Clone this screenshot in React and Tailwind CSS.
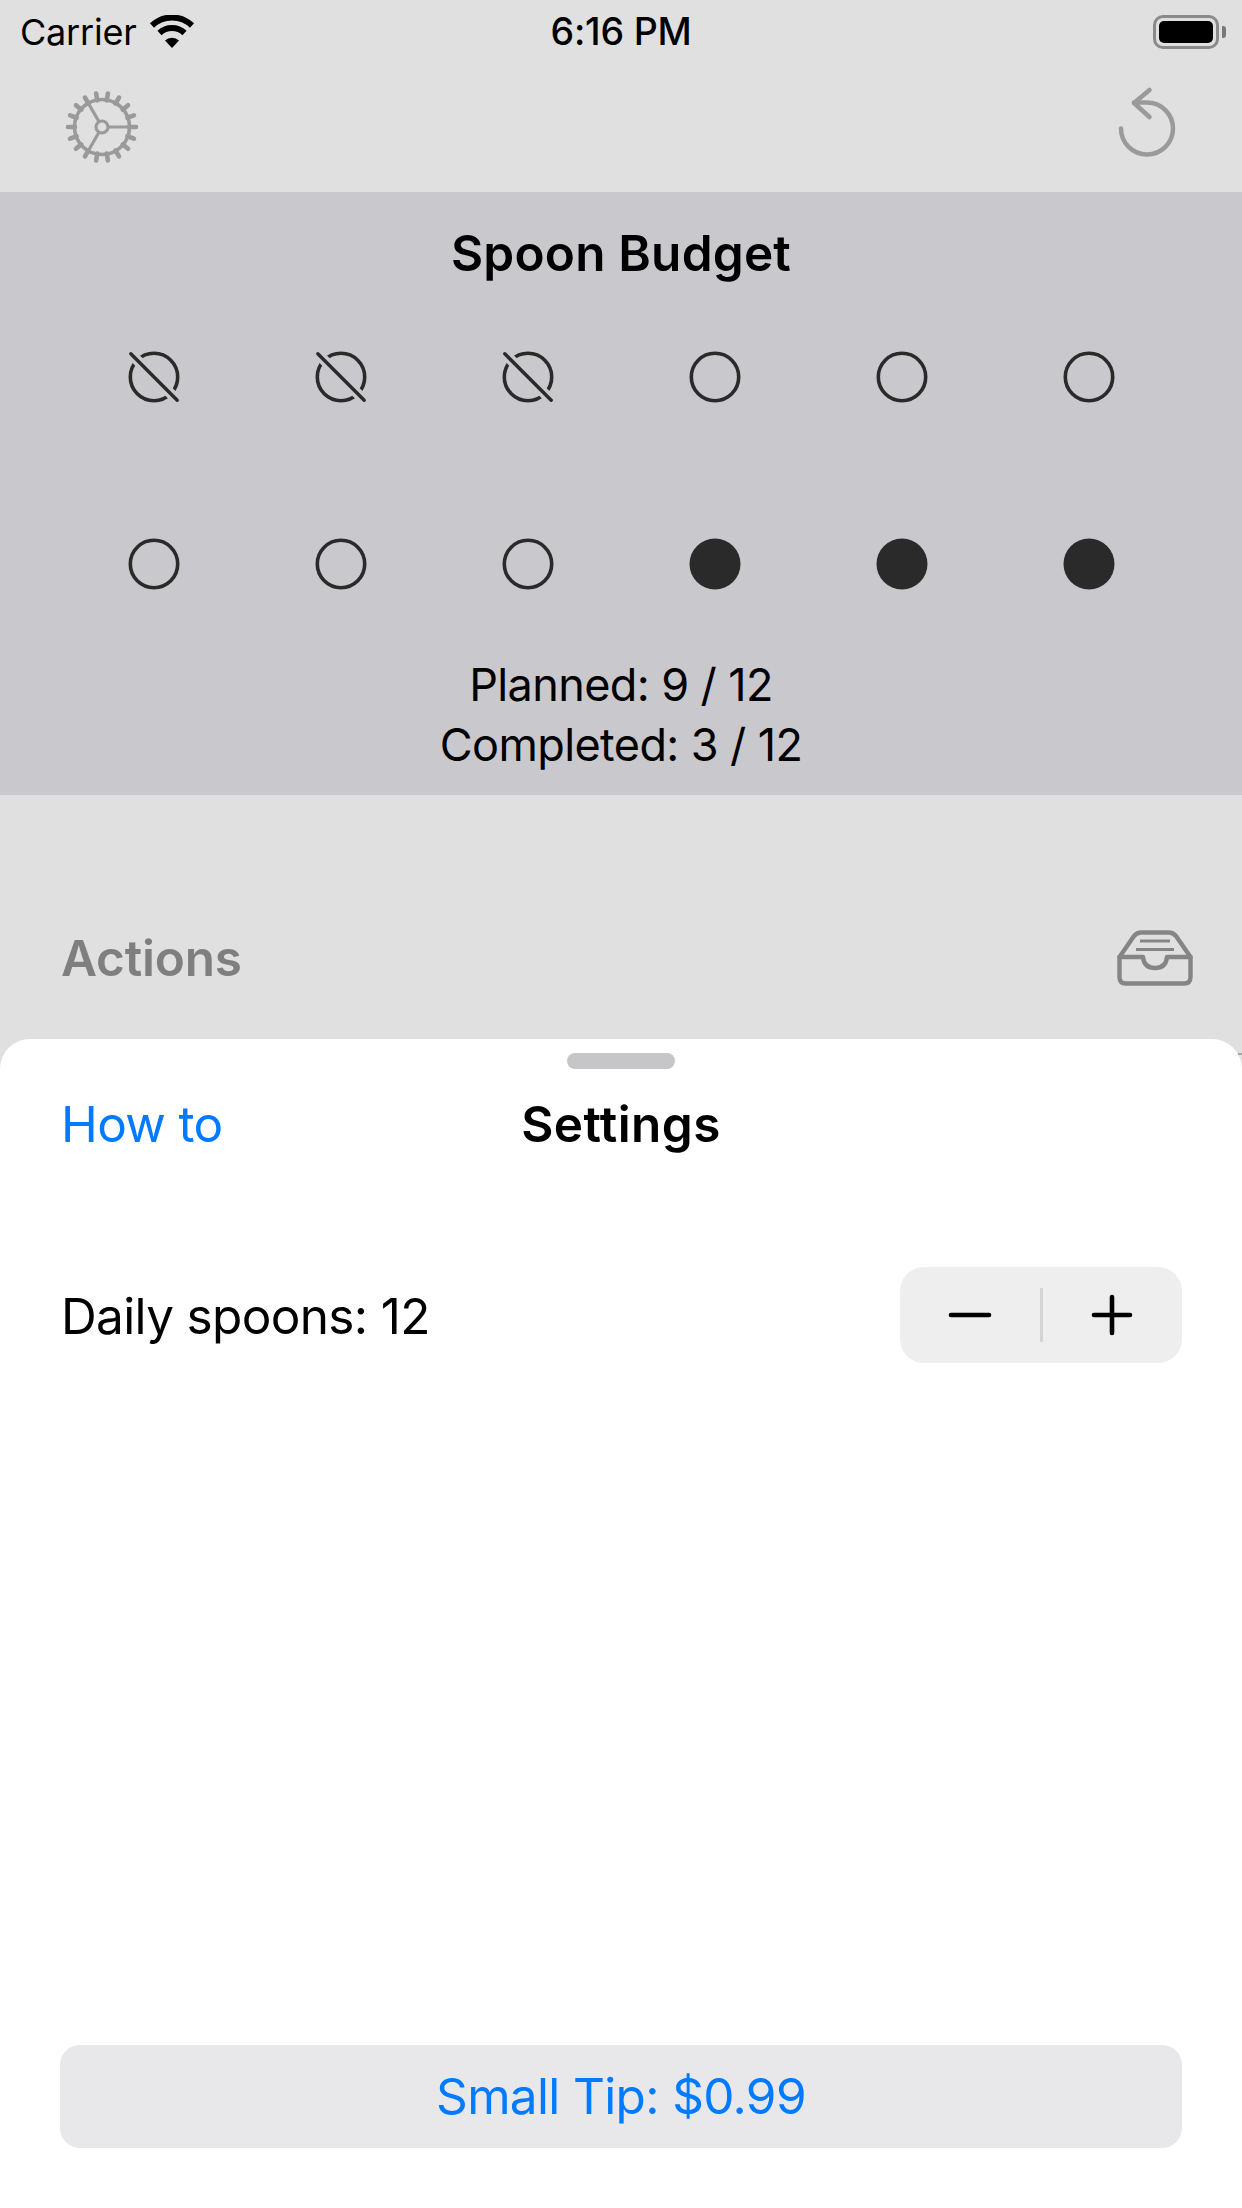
const FONT = "font-['Inter','Liberation_Sans',sans-serif]";

function Wifi() {
  return (
    <svg width="46" height="34" viewBox="0 0 46 34" className="ml-[12px]">
      <path d="M3 10.5 A29 29 0 0 1 43 10.5" fill="none" stroke="#000" strokeWidth="6" />
      <path d="M10.5 18 A18 18 0 0 1 35.5 18" fill="none" stroke="#000" strokeWidth="6" />
      <path d="M16 25.5 A10 10 0 0 1 30 25.5 L23 33 Z" fill="#000" />
    </svg>
  );
}

function Battery() {
  return (
    <div className="flex items-center gap-[3px]">
      <div className="w-[66px] h-[34px] rounded-[10px] border-[3px] border-[#8a8a8a] p-[3px]">
        <div className="w-full h-full rounded-[5px] bg-black" />
      </div>
      <div className="w-[4px] h-[12px] rounded-r-[3px] bg-[#777777]" />
    </div>
  );
}

function Gear() {
  const teeth = Array.from({ length: 18 }, (_, i) => i * 20 + 10);
  return (
    <svg width="76" height="76" viewBox="0 0 76 76" className="mb-[3px]">
      <g stroke="#9a9a9a" fill="none">
        <circle cx="38" cy="38" r="27.5" strokeWidth="3.6" />
        <circle cx="38" cy="38" r="6" strokeWidth="3.2" />
        {teeth.map((a) => (
          <line key={a} x1="38" y1="11" x2="38" y2="4" strokeWidth="4.6" strokeLinecap="round" transform={`rotate(${a} 38 38)`} />
        ))}
        <path d="M44 38 H65 M35 32.8 L24.2 14 M35 43.2 L24.2 62" strokeWidth="3.2" />
      </g>
    </svg>
  );
}

function Undo() {
  return (
    <svg width="60" height="84" viewBox="0 0 60 84">
      <g fill="none" stroke="#9a9a9a" strokeWidth="4.5" strokeLinecap="round" strokeLinejoin="round">
        <path d="M4 42.5 A26 26 0 1 0 30 16.5 L17 16.5" />
        <path d="M32.5 4 L17 17 L32.5 31" />
      </g>
    </svg>
  );
}

function Spoon({ kind }) {
  if (kind === "full") {
    return <svg width="52" height="52" viewBox="0 0 52 52"><circle cx="26" cy="26" r="25.5" fill="#2a2a2a" /></svg>;
  }
  return (
    <svg width="56" height="56" viewBox="0 0 56 56">
      <circle cx="28" cy="28" r="23.7" fill="none" stroke="#2a2a2a" strokeWidth="3.6" />
      {kind === "used" && (
        <>
          <line x1="4" y1="4" x2="52" y2="52" stroke="#c9c8cd" strokeWidth="10.5" />
          <line x1="4.8" y1="4.8" x2="51.2" y2="51.2" stroke="#2a2a2a" strokeWidth="3.4" strokeLinecap="round" />
        </>
      )}
    </svg>
  );
}

function Inbox() {
  return (
    <svg width="78" height="56" viewBox="0 0 78 56">
      <g fill="none" stroke="#858585" strokeWidth="4.4" strokeLinejoin="round" strokeLinecap="round">
        <path d="M3.5 27 L18 6 Q21 2.5 25 2.5 H53 Q57 2.5 60 6 L74.5 27 V47 Q74.5 53.5 68 53.5 H10 Q3.5 53.5 3.5 47 Z" />
        <path d="M3.5 27 H27 Q28 38 39 38 Q50 38 51 27 H74.5" />
      </g>
      <path d="M24 11 H54 M20 19.5 H58" stroke="#858585" strokeWidth="3" />
    </svg>
  );
}

const spoons = ["used", "used", "used", "empty", "empty", "empty", "empty", "empty", "empty", "full", "full", "full"];

export default function App() {
  return (
    <div className={`${FONT} w-[1242px] h-[2208px] bg-[#e0e0e0] flex flex-col text-black overflow-hidden`}>
      <div className="h-[64px] relative flex items-center justify-between pl-[20px] pr-[16px]">
        <div className="flex items-center">
          <span className="text-[36px] tracking-[-0.2px] leading-none">Carrier</span>
          <Wifi />
        </div>
        <span className="absolute left-0 right-0 text-center text-[37.5px] font-medium tracking-[-0.2px] leading-none">6:16 PM</span>
        <Battery />
      </div>

      <div className="h-[128px] flex items-center justify-between pl-[64px] pr-[65px]">
        <Gear />
        <Undo />
      </div>

      <section className="h-[603px] bg-[#c9c8cd] px-[60px] flex flex-col items-center">
        <h1 className="mt-[38px] h-[48px] flex items-center text-[49.5px] font-semibold tracking-[0.2px] leading-none">Spoon Budget</h1>
        <div className="mt-[5px] w-full grid grid-cols-6 auto-rows-[187px]">
          {spoons.map((k, i) => (
            <div key={i} className="flex items-center justify-center"><Spoon kind={k} /></div>
          ))}
        </div>
        <div className="mt-[-2px] text-[45px] leading-[60px] text-center tracking-[-0.6px]">
          <p>Planned: 9 / 12</p>
          <p>Completed: 3 / 12</p>
        </div>
      </section>

      <div className="h-[244px] flex items-start justify-between pl-[61px] pr-[48px]">
        <span className="mt-[135px] text-[49.5px] font-semibold leading-[56px] tracking-[-0.2px] text-[#7f7f7f]">Actions</span>
        <div className="mt-[135px]"><Inbox /></div>
      </div>

      <section className="relative flex-1 bg-white rounded-t-[30px] px-[60px] flex flex-col">
        <div className="absolute top-[14px] right-0 w-[4px] h-[2px] bg-[#a8a8a8]" />
        <div className="self-center mt-[14px] w-[108px] h-[16px] rounded-full bg-[#c6c6c8]" />
        <div className="relative mt-[28px] h-[56px] flex items-center">
          <span className="ml-[1px] text-[49.5px] tracking-[-0.65px] text-[#007aff] leading-none">How to</span>
          <span className="absolute left-0 right-0 text-center text-[49.5px] font-semibold tracking-[0.4px] leading-none">Settings</span>
        </div>
        <div className="mt-[114px] flex items-center justify-between">
          <span className="ml-[1px] mt-[3px] text-[49.5px] tracking-[-0.65px] leading-none">Daily spoons: 12</span>
          <div className="w-[282px] h-[96px] rounded-[24px] bg-[#eeeeef] flex items-center">
            <div className="flex-1 flex items-center justify-center">
              <svg width="44" height="44" viewBox="0 0 44 44"><path d="M3 22 H41" stroke="#000" strokeWidth="4.6" strokeLinecap="round" /></svg>
            </div>
            <div className="w-[3px] h-[54px] bg-[#d4d4d5]" />
            <div className="flex-1 flex items-center justify-center">
              <svg width="44" height="44" viewBox="0 0 44 44"><path d="M4 22 H40 M22 4 V40" stroke="#000" strokeWidth="4.6" strokeLinecap="round" /></svg>
            </div>
          </div>
        </div>
        <div className="mt-auto mb-[60px] h-[103px] rounded-[20px] bg-[#e8e8ea] flex items-center justify-center">
          <span className="text-[49.5px] tracking-[-0.65px] text-[#007aff] leading-none">Small Tip: $0.99</span>
        </div>
      </section>
    </div>
  );
}
